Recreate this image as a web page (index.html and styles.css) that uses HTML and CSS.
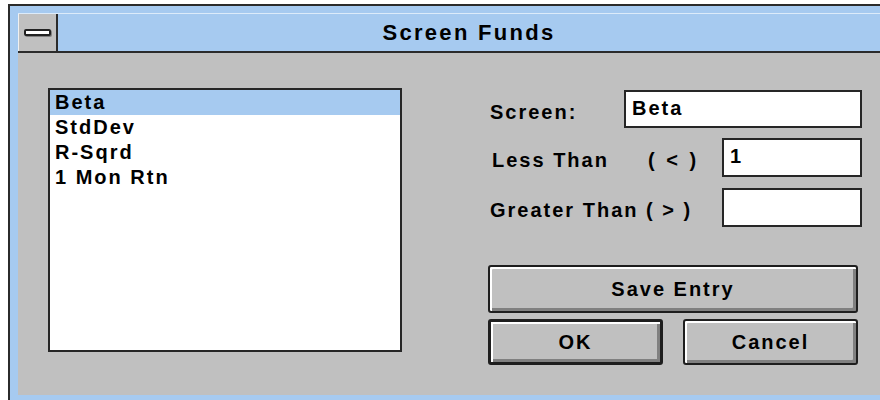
FILE: index.html
```html
<!DOCTYPE html>
<html lang="en">
<head>
<meta charset="utf-8">
<title>Screen Funds</title>
<link rel="stylesheet" href="styles.css">
</head>
<body>
<div class="window">
  <div class="titlebar">
    <div class="sysmenu"><span class="sysbar"></span></div>
    <div class="title">Screen Funds</div>
  </div>
  <div class="client">
    <ul class="listbox">
      <li class="sel">Beta</li>
      <li>StdDev</li>
      <li>R-Sqrd</li>
      <li>1 Mon Rtn</li>
    </ul>
    <div class="form">
      <div class="field f-screen">
        <span class="label">Screen:</span>
        <div class="edit wide">Beta</div>
      </div>
      <div class="field f-less">
        <span class="label">Less Than</span>
        <span class="op">( &lt; )</span>
        <div class="edit">1</div>
      </div>
      <div class="field f-greater">
        <span class="label">Greater Than ( &gt; )</span>
        <div class="edit"></div>
      </div>
      <div class="btn save">Save Entry</div>
      <div class="btnrow">
        <div class="btn default">OK</div>
        <div class="btn">Cancel</div>
      </div>
    </div>
  </div>
</div>
</body>
</html>
```
FILE: styles.css
```css
html, body {
  margin: 0;
  background: #fff;
  overflow: hidden;
}

body {
  font-family: "Liberation Sans", Arial, sans-serif;
  font-weight: bold;
  font-size: 20px;
  letter-spacing: 2px;
  color: #000;
}

/* window frame: dark outline, sky-blue sizing border */
.window {
  margin: 4px 0 0 8px;
  border-top: 2px solid #2b2b2b;
  border-left: 2px solid #2b2b2b;
  background: #a6caf0;
  padding: 7px 0 5px 8px;
}

.titlebar {
  display: flex;
  height: 37px;
  border-top: 1px solid #dcebfa;
  border-bottom: 2px solid #2b2b2b;
}

.sysmenu {
  width: 38px;
  background: #c0c0c0;
  border-right: 2px solid #2b2b2b;
  box-shadow: inset 1px 0 0 #f0f0f0;
  display: flex;
  align-items: center;
  justify-content: center;
}

.sysbar {
  width: 27px;
  height: 7px;
  box-sizing: border-box;
  border: 2px solid #222;
  border-radius: 2px;
  background: #fff;
  box-shadow: 1px 1px 0 #808080;
}

.title {
  flex: 1;
  text-align: center;
  line-height: 37px;
  font-size: 22px;
  letter-spacing: 2.3px;
}

.client {
  background: #c0c0c0;
  height: 342px;
  box-sizing: border-box;
  padding: 35px 0 0 30px;
  display: flex;
  align-items: flex-start;
}

.listbox {
  width: 354px;
  height: 264px;
  box-sizing: border-box;
  margin: 0;
  padding: 0;
  list-style: none;
  border: 2px solid #262626;
  background: #fff;
}

.listbox li {
  height: 25px;
  line-height: 25px;
  padding-left: 5px;
}

.listbox li.sel {
  background: #a6caf0;
}

.form {
  margin: 2px 0 0 86px;
  width: 374px;
  display: flex;
  flex-direction: column;
}

.field {
  display: flex;
  align-items: center;
}

.f-screen { height: 38px; }
.f-less { height: 39px; margin-top: 10px; }
.f-greater { height: 39px; margin-top: 11px; }

.label {
  padding-top: 6px;
}

.f-screen .label { width: 134px; padding-left: 2px; }
.f-less .label { width: 156px; padding-left: 4px; }
.f-less .op { width: 74px; padding-top: 6px; letter-spacing: 3px; }
.f-greater .label { width: 232px; padding-left: 2px; }

.edit {
  height: 100%;
  box-sizing: border-box;
  width: 140px;
  border: 2px solid #262626;
  background: #fff;
  padding: 4px 6px;
  line-height: 24px;
}

.edit.wide { width: 238px; }

/* 3D push buttons */
.btn {
  box-sizing: border-box;
  border: 2px solid #1e1e1e;
  border-radius: 3px;
  background: #c0c0c0;
  box-shadow: inset 2px 2px 0 #fff, inset -3px -3px 0 #808080;
  display: flex;
  align-items: center;
  justify-content: center;
}

.save {
  width: 370px;
  height: 48px;
  margin-top: 38px;
}

.btnrow {
  display: flex;
  gap: 20px;
  margin-top: 6px;
}

.btnrow .btn {
  width: 175px;
  height: 46px;
}

.btn.default {
  border-width: 3px;
}
```
